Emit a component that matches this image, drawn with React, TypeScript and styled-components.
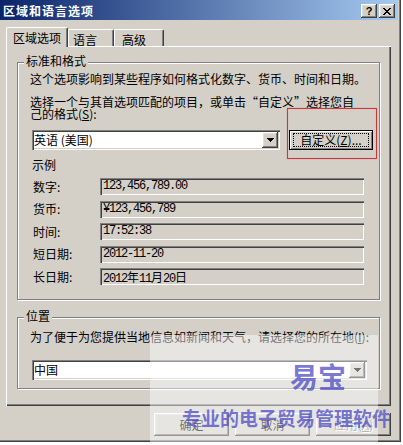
import React from "react";
import styled, { createGlobalStyle, css } from "styled-components";

const Global = createGlobalStyle`
  html, body { margin: 0; padding: 0; background: #fff; }
  body {
    font-family: "Noto Sans CJK SC", "Noto Sans", sans-serif;
    font-size: 12px;
    color: #000;
  }
  * { box-sizing: border-box; }
`;

const raised = css`
  box-shadow: inset -1px -1px #404040, inset 1px 1px #fff, inset -2px -2px #808080, inset 2px 2px #dfdfdf;
`;
const sunken = css`
  box-shadow: inset 1px 1px #808080, inset 2px 2px #404040, inset -1px -1px #fff, inset -2px -2px #d4d0c8;
`;

const Window = styled.div`
  position: relative;
  width: 401px;
  height: 442px;
  background: #d4d0c8;
  box-shadow: inset -1px -1px #404040, inset -2px -2px #808080;
  display: flex;
  flex-direction: column;
`;

const TitleBar = styled.div`
  height: 20px;
  margin-right: 3px;
  padding: 2px 3px 0 3px;
  display: flex;
  align-items: center;
  background: linear-gradient(to right, #0a246a, #a6caf0);
`;

const TitleText = styled.div`
  flex: 1;
  color: #fff;
  font-weight: bold;
  font-size: 12px;
  letter-spacing: 1px;
  line-height: 18px;
  white-space: nowrap;
`;

const CaptionButton = styled.div<{ $ml?: number }>`
  width: 16px;
  height: 14px;
  margin-left: ${(p) => p.$ml ?? 0}px;
  background: #d4d0c8;
  ${raised}
  display: flex;
  align-items: center;
  justify-content: center;
  font-family: "Liberation Sans", Arial, sans-serif;
  font-weight: bold;
  font-size: 11px;
  line-height: 1;
`;

const Body = styled.div`
  flex: 1;
  display: flex;
  flex-direction: column;
  padding: 7px 10px 0 6px;
`;

const TabStrip = styled.div`
  display: flex;
  align-items: flex-end;
  height: 19px;
`;

const Tab = styled.div<{ $active?: boolean; $w: number; $pl: number }>`
  position: relative;
  z-index: ${(p) => (p.$active ? 2 : 0)};
  width: ${(p) => p.$w}px;
  height: ${(p) => (p.$active ? 20 : 17)}px;
  margin-bottom: ${(p) => (p.$active ? -1 : 0)}px;
  padding: 3px 0 0 ${(p) => p.$pl}px;
  line-height: 14px;
  background: #d4d0c8;
  border-top: 1px solid #fff;
  border-left: 1px solid #fff;
  border-right: 1px solid #404040;
  border-top-left-radius: 2px;
  border-top-right-radius: 2px;
  box-shadow: inset -1px 0 #808080;
  white-space: nowrap;
`;

const Panel = styled.div`
  position: relative;
  z-index: 1;
  height: 360px;
  padding: 16px 11px 0 11px;
  box-shadow: inset 1px 1px #fff, inset -1px -1px #404040, inset -2px -2px #808080;
`;

const GroupBox = styled.div<{ $mt?: number; $pt: number; $pb: number }>`
  position: relative;
  margin-top: ${(p) => p.$mt ?? 0}px;
  padding: ${(p) => p.$pt}px 0 ${(p) => p.$pb}px 12px;
  border: 1px solid #808080;
  box-shadow: inset 1px 1px #fff, 1px 1px 0 #fff;
`;

const Legend = styled.span`
  position: absolute;
  top: -9px;
  left: 6px;
  padding: 0 2px;
  background: #d4d0c8;
  line-height: 14px;
  white-space: nowrap;
`;

const Line = styled.div<{ $lh?: number; $mt?: number; $ml?: number }>`
  line-height: ${(p) => p.$lh ?? 14}px;
  margin-top: ${(p) => p.$mt ?? 0}px;
  margin-left: ${(p) => p.$ml ?? 0}px;
  white-space: nowrap;
`;

const Q = styled.span`
  font-feature-settings: "fwid" 1;
`;

const ComboRow = styled.div<{ $mt: number }>`
  display: flex;
  align-items: center;
  margin-top: ${(p) => p.$mt}px;
  margin-left: 2px;
`;

const Combo = styled.div<{ $w: number }>`
  display: flex;
  width: ${(p) => p.$w}px;
  height: 20px;
  padding: 2px;
  background: #fff;
  ${sunken}
`;

const ComboText = styled.div`
  flex: 1;
  line-height: 16px;
  white-space: nowrap;
`;

const DropButton = styled.div`
  width: 16px;
  height: 16px;
  background: #d4d0c8;
  ${raised}
  display: flex;
  align-items: center;
  justify-content: center;
`;

const DefaultButton = styled.div`
  margin-left: 9px;
  width: 84px;
  height: 20px;
  border: 1px solid #000;
  box-shadow: inset 1px 1px #fff, inset -1px -1px #808080;
  padding: 2px 3px;
  display: flex;
`;

const FocusRect = styled.div`
  flex: 1;
  border: 1px dotted #000;
  line-height: 12px;
  text-align: center;
  white-space: nowrap;
`;

const SampleList = styled.div`
  display: flex;
  flex-direction: column;
  gap: 5.5px;
  margin-top: 6px;
`;

const SampleRow = styled.div`
  display: flex;
  align-items: center;
  height: 17px;
`;

const SampleLabel = styled.div`
  width: 70px;
  padding-left: 3px;
  line-height: 14px;
  white-space: nowrap;
`;

const Field = styled.div`
  width: 264px;
  height: 17px;
  padding-left: 3px;
  background: #d4d0c8;
  ${sunken}
  font-family: "Liberation Mono", "Noto Sans CJK SC", monospace;
  font-size: 12px;
  letter-spacing: -1.2px;
  line-height: 17px;
  white-space: nowrap;
`;

const Cjk = styled.span`
  font-family: "Noto Sans CJK SC", sans-serif;
  font-size: 12px;
  letter-spacing: 0;
`;

const ButtonRow = styled.div`
  display: flex;
  justify-content: flex-end;
  gap: 6px;
  margin-top: 7px;
`;

const PushButton = styled.div<{ $disabled?: boolean }>`
  width: 75px;
  height: 23px;
  ${raised}
  text-align: center;
  line-height: 23px;
  color: ${(p) => (p.$disabled ? "#808080" : "#000")};
  text-shadow: ${(p) => (p.$disabled ? "1px 1px #fff" : "none")};
`;

const overlay = css`
  position: absolute;
  z-index: 5;
  pointer-events: none;
`;

const Annotation = styled.div`
  ${overlay}
  left: 287px;
  top: 108px;
  width: 90px;
  height: 51px;
  border: 1px solid #c8383c;
  box-shadow: 0 0 1px rgba(220, 90, 90, 0.6), inset 0 0 1px rgba(220, 90, 90, 0.6);
`;

const Veil = styled.div`
  ${overlay}
  left: 150px;
  top: 335px;
  width: 228px;
  height: 110px;
  background: rgba(255, 255, 255, 0.45);
`;

const MarkBig = styled.div`
  ${overlay}
  left: 290px;
  top: 362px;
  font-size: 28px;
  font-weight: bold;
  line-height: 1;
  color: rgba(70, 70, 195, 0.72);
  white-space: nowrap;
`;

const MarkSmall = styled.div`
  ${overlay}
  left: 182px;
  top: 408px;
  font-size: 19px;
  font-weight: bold;
  line-height: 1;
  color: rgba(70, 70, 195, 0.72);
  white-space: nowrap;
`;

const CloseGlyph = () => (
  <svg width="8" height="7" viewBox="0 0 8 7" shapeRendering="crispEdges">
    <path
      fill="#000"
      d="M0 0h2v1H0z M6 0h2v1H6z M1 1h2v1H1z M5 1h2v1H5z M2 2h4v1H2z M3 3h2v1H3z M2 4h4v1H2z M1 5h2v1H1z M5 5h2v1H5z M0 6h2v1H0z M6 6h2v1H6z"
    />
  </svg>
);

const Arrow = () => (
  <svg width="7" height="4" viewBox="0 0 7 4" shapeRendering="crispEdges">
    <path fill="#000" d="M0 0h7v1H0z M1 1h5v1H1z M2 2h3v1H2z M3 3h1v1H3z" />
  </svg>
);

const samples: { label: string; value: React.ReactNode }[] = [
  { label: "数字:", value: "123,456,789.00" },
  { label: "货币:", value: "¥123,456,789" },
  { label: "时间:", value: "17:52:38" },
  { label: "短日期:", value: "2012-11-20" },
  {
    label: "长日期:",
    value: (
      <>
        2012<Cjk>年</Cjk>11<Cjk>月</Cjk>20<Cjk>日</Cjk>
      </>
    ),
  },
];

export default function App() {
  return (
    <>
      <Global />
      <Window lang="zh-CN">
        <TitleBar>
          <TitleText>区域和语言选项</TitleText>
          <CaptionButton>?</CaptionButton>
          <CaptionButton $ml={2}>
            <CloseGlyph />
          </CaptionButton>
        </TitleBar>
        <Body>
          <TabStrip>
            <Tab $active $w={62} $pl={6}>区域选项</Tab>
            <Tab $w={46} $pl={4}>语言</Tab>
            <Tab $w={50} $pl={7}>高级</Tab>
          </TabStrip>
          <Panel>
            <GroupBox $pt={9} $pb={14}>
              <Legend>标准和格式</Legend>
              <Line>这个选项影响到某些程序如何格式化数字、货币、时间和日期。</Line>
              <Line $lh={12} $mt={10}>
                选择一个与其首选项匹配的项目，或单击<Q>“</Q>自定义<Q>”</Q>选择您自
              </Line>
              <Line $lh={12}>
                己的格式(<u>S</u>):
              </Line>
              <ComboRow $mt={10}>
                <Combo $w={248}>
                  <ComboText>英语 (美国)</ComboText>
                  <DropButton>
                    <Arrow />
                  </DropButton>
                </Combo>
                <DefaultButton>
                  <FocusRect>
                    自定义(<u>Z</u>)...
                  </FocusRect>
                </DefaultButton>
              </ComboRow>
              <Line $mt={8} $ml={2}>示例</Line>
              <SampleList>
                {samples.map((s) => (
                  <SampleRow key={s.label}>
                    <SampleLabel>{s.label}</SampleLabel>
                    <Field>{s.value}</Field>
                  </SampleRow>
                ))}
              </SampleList>
            </GroupBox>
            <GroupBox $mt={17} $pt={12} $pb={8}>
              <Legend>位置</Legend>
              <Line>
                为了便于为您提供当地信息如新闻和天气，请选择您的所在地(<u>I</u>):
              </Line>
              <ComboRow $mt={16}>
                <Combo $w={335}>
                  <ComboText>中国</ComboText>
                  <DropButton>
                    <Arrow />
                  </DropButton>
                </Combo>
              </ComboRow>
            </GroupBox>
          </Panel>
          <ButtonRow>
            <PushButton>确定</PushButton>
            <PushButton>取消</PushButton>
            <PushButton $disabled>
              应用(<u>A</u>)
            </PushButton>
          </ButtonRow>
        </Body>
        <Annotation />
        <Veil />
        <MarkBig>易宝</MarkBig>
        <MarkSmall>专业的电子贸易管理软件</MarkSmall>
      </Window>
    </>
  );
}
